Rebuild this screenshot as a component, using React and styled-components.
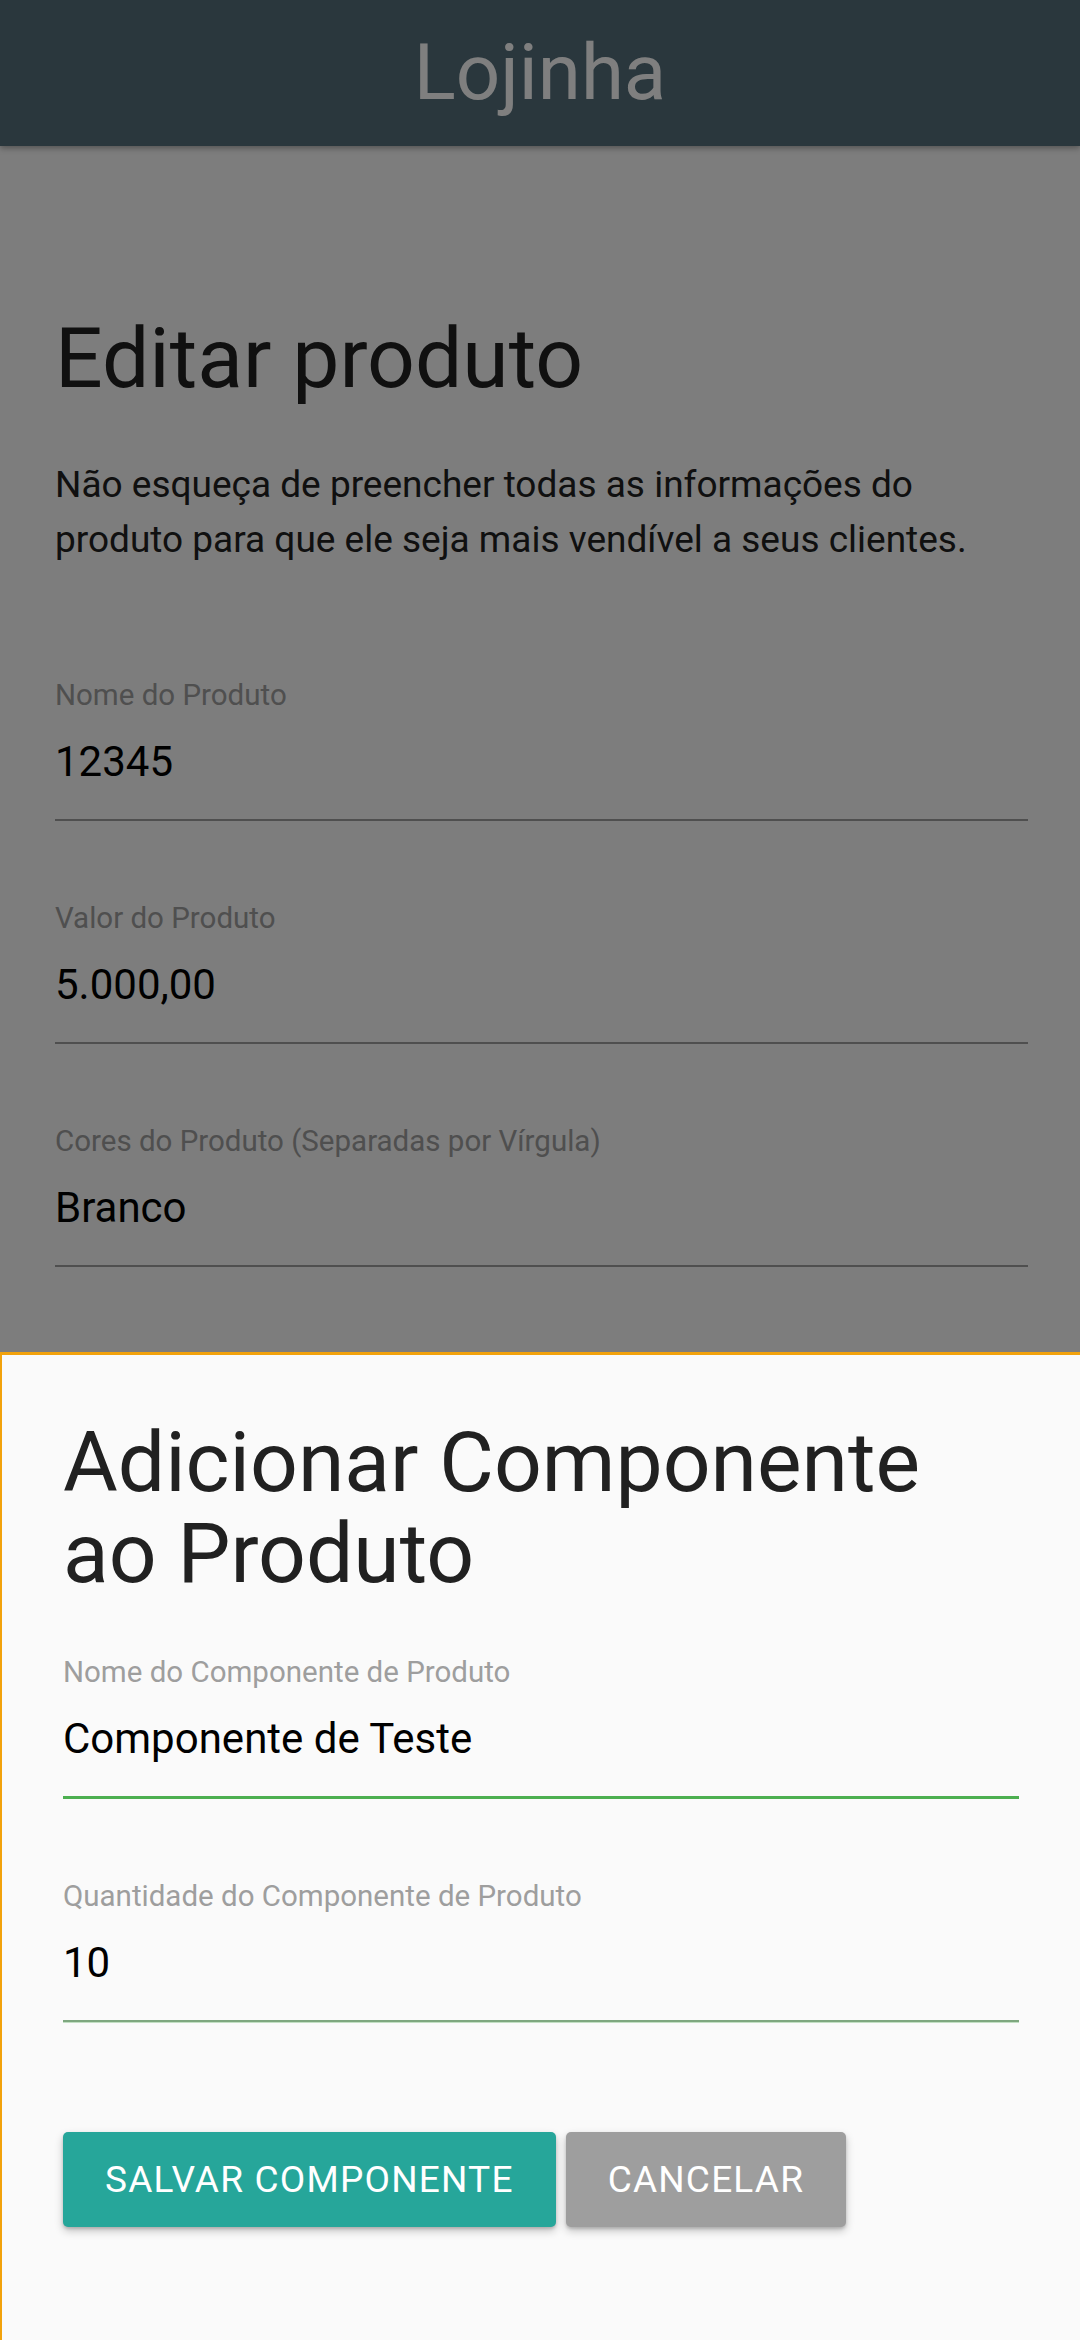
import styled, { createGlobalStyle } from "styled-components";

const GlobalStyle = createGlobalStyle`
  html, body {
    margin: 0;
    padding: 0;
    background: #fafafa;
    font-family: Roboto, "Noto Sans", sans-serif;
  }
  * {
    box-sizing: border-box;
  }
`;

const pageFields = [
  { label: "Nome do Produto", value: "12345" },
  { label: "Valor do Produto", value: "5.000,00" },
  { label: "Cores do Produto (Separadas por Vírgula)", value: "Branco" },
];

const App = () => {
  return (
    <>
      <GlobalStyle />
      <Page>
        <Header>
          <Brand>Lojinha</Brand>
        </Header>
        <Container>
          <Title>Editar produto</Title>
          <Lead>
            Não esqueça de preencher todas as informações do produto para que
            ele seja mais vendível a seus clientes.
          </Lead>
          {pageFields.map((f, i) => (
            <Field key={i}>
              <Label>{f.label}</Label>
              <Input defaultValue={f.value} readOnly />
            </Field>
          ))}
        </Container>
      </Page>
      <Overlay />
      <Sheet>
        <SheetTitle>
          Adicionar Componente
          <br />
          ao Produto
        </SheetTitle>
        <Field $compact>
          <Label>Nome do Componente de Produto</Label>
          <Input defaultValue="Componente de Teste" readOnly $state="focus" />
        </Field>
        <Field $compact>
          <Label>Quantidade do Componente de Produto</Label>
          <Input defaultValue="10" readOnly $state="valid" />
        </Field>
        <Actions>
          <Button $color="#26a69a">Salvar componente</Button>
          <Button $color="#9e9e9e">Cancelar</Button>
        </Actions>
      </Sheet>
    </>
  );
};

export default App;

const Page = styled.div`
  min-height: 2340px;
  background: #fafafa;
`;

const Header = styled.header`
  height: 146px;
  background: #546e7a;
  display: flex;
  align-items: center;
  justify-content: center;
  box-shadow: 0 2px 6px rgba(0, 0, 0, 0.35);
`;

const Brand = styled.h1`
  margin: 0;
  color: #ffffff;
  font-size: 78px;
  font-weight: 400;
  line-height: 146px;
`;

const Container = styled.main`
  padding: 0 52px 0 55px;
`;

const Title = styled.h2`
  margin: 168px 0 0;
  font-size: 84px;
  font-weight: 400;
  line-height: 90px;
  color: #212121;
`;

const Lead = styled.p`
  margin: 53px 0 0;
  font-size: 37px;
  line-height: 55px;
  color: #212121;
`;

const Field = styled.div`
  display: flex;
  flex-direction: column;
  margin-top: ${(p) => (p.$compact ? "57px" : "112px")};

  & + & {
    margin-top: 81px;
  }
`;

const Label = styled.label`
  font-size: 29.5px;
  line-height: 32px;
  color: #9e9e9e;
`;

const underline = {
  focus: "border-bottom: 3px solid #4caf50;",
  valid: "border-bottom: 2px solid #7ea77f; box-shadow: 0 1px 0 #c2dfc3;",
};

const Input = styled.input`
  box-sizing: content-box;
  margin-top: 26px;
  padding: 0 0 32px;
  height: 50px;
  border: none;
  ${(p) => underline[p.$state] || "border-bottom: 2px solid #9e9e9e;"}
  background: transparent;
  font-family: Roboto, "Noto Sans", sans-serif;
  font-size: 42px;
  line-height: 50px;
  color: #000;
  outline: none;
`;

const Overlay = styled.div`
  position: fixed;
  inset: 0;
  background: rgba(0, 0, 0, 0.5);
  z-index: 10;
`;

const Sheet = styled.section`
  position: fixed;
  left: 0;
  right: 0;
  bottom: 0;
  height: 988px;
  z-index: 20;
  background: #fafafa;
  border-top: 3px solid #f2a20c;
  border-left: 2px solid #f2a20c;
  padding: 62px 61px 0 61px;
`;

const SheetTitle = styled.h3`
  margin: 0;
  font-size: 84px;
  font-weight: 400;
  line-height: 91px;
  color: #212121;
`;

const Actions = styled.div`
  display: flex;
  gap: 10px;
  margin-top: 110px;
`;

const Button = styled.button`
  height: 95px;
  padding: 0 42px;
  border: none;
  border-radius: 5px;
  background: ${(p) => p.$color};
  color: #ffffff;
  font-family: Roboto, "Noto Sans", sans-serif;
  font-size: 37px;
  letter-spacing: 1.2px;
  text-transform: uppercase;
  box-shadow: 0 4px 8px rgba(0, 0, 0, 0.22), 0 2px 3px rgba(0, 0, 0, 0.15);
`;
